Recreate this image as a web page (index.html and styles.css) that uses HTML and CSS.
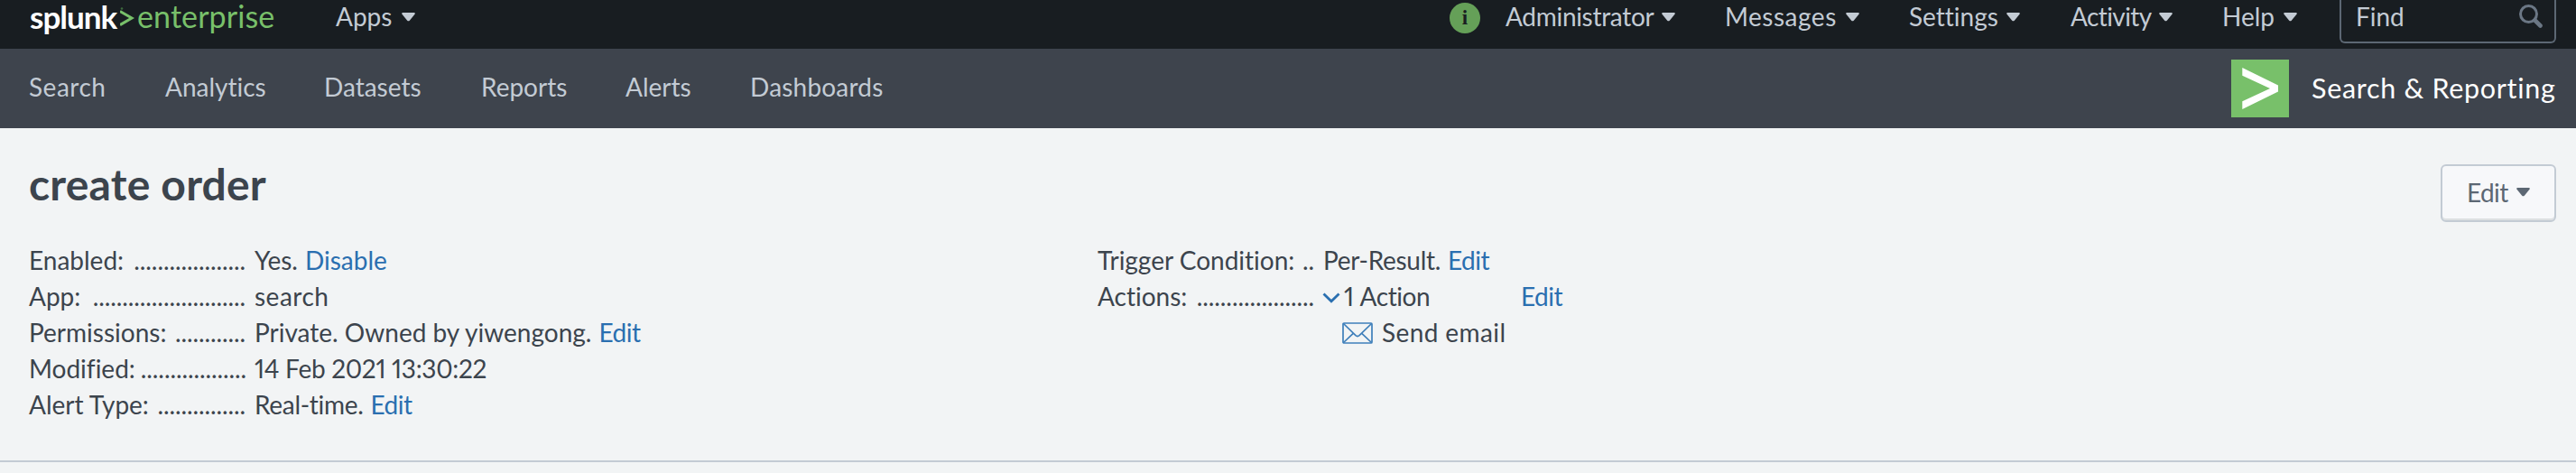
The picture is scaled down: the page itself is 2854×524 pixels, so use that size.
FILE: index.html
```html
<!DOCTYPE html>
<html lang="en">
<head>
<meta charset="utf-8">
<title>create order | Splunk</title>
<link rel="stylesheet" href="styles.css">
</head>
<body>
<svg width="0" height="0" class="defs"><defs>
<symbol id="caret" viewBox="0 0 15 10"><path d="M1.2 0H13.8Q15.4 .3 14.5 1.8L8.8 8.7Q7.5 10 6.2 8.7L.5 1.8Q-.4 .3 1.2 0Z" fill="currentColor"/></symbol>
</defs></svg>
<header class="topbar">
  <a class="logo"><span class="logo-name">splunk</span><svg class="logo-mark" viewBox="0 0 16 22"><path d="M0 4.6L13 12L0 19.6" fill="none" stroke="#78c06a" stroke-width="3"/><circle cx="2" cy="1.5" r="1.3" fill="#3c6b3d"/></svg><span class="logo-product">enterprise</span></a>
  <a class="menu apps"><span class="t-apps">Apps</span><svg class="caret"><use href="#caret"/></svg></a>
  <div class="topright">
    <span class="info">i</span>
    <a class="menu m-admin"><span class="t-admin">Administrator</span><svg class="caret"><use href="#caret"/></svg></a>
    <a class="menu m-messages"><span class="t-messages">Messages</span><svg class="caret"><use href="#caret"/></svg></a>
    <a class="menu m-settings"><span class="t-settings">Settings</span><svg class="caret"><use href="#caret"/></svg></a>
    <a class="menu m-activity"><span class="t-activity">Activity</span><svg class="caret"><use href="#caret"/></svg></a>
    <a class="menu m-help"><span class="t-help">Help</span><svg class="caret"><use href="#caret"/></svg></a>
    <div class="find"><span>Find</span><svg class="lens" viewBox="0 0 26 26"><ellipse cx="10.5" cy="10.5" rx="9" ry="9" fill="none" stroke="#6b7785" stroke-width="3"/><path d="M17.5 17.5L23.5 23.5" stroke="#6b7785" stroke-width="4.6" stroke-linecap="round"/></svg></div>
  </div>
</header>
<nav class="appbar">
  <div class="tabs">
    <a class="t-search">Search</a><a>Analytics</a><a>Datasets</a><a>Reports</a><a>Alerts</a><a class="t-dash">Dashboards</a>
  </div>
  <div class="app">
    <svg class="app-icon" viewBox="0 0 64 64"><rect width="64" height="64" fill="#78c06a"/><path d="M12.3 9L52 28.5V35.5L12.3 55V46.3L43 32L12.3 17.7Z" fill="#fff"/></svg>
    <span class="app-name">Search &amp; Reporting</span>
  </div>
</nav>
<main class="page">
  <div class="heading">
    <h1>create order</h1>
    <button class="edit-btn"><span>Edit</span><svg class="caret"><use href="#caret"/></svg></button>
  </div>
  <div class="details">
    <dl class="list">
      <dt><span>Enabled:</span><i>...................</i></dt><dd><span>Yes.</span><a class="disable">Disable</a></dd>
      <dt><span>App:</span><i>..........................</i></dt><dd><span class="t-app">search</span></dd>
      <dt><span>Permissions:</span><i>............</i></dt><dd><span class="t-owner">Private. Owned by yiwengong.</span><a>Edit</a></dd>
      <dt><span>Modified:</span><i>..................</i></dt><dd><span class="t-date">14 Feb 2021 13:30:22</span></dd>
      <dt><span>Alert Type:</span><i>...............</i></dt><dd><span class="t-type">Real-time.</span><a>Edit</a></dd>
    </dl>
    <dl class="list">
      <dt><span>Trigger Condition:</span><i>..</i></dt><dd><span class="t-trigger">Per-Result.</span><a>Edit</a></dd>
      <dt><span>Actions:</span><i>....................</i></dt>
      <dd class="action"><svg class="chevron" viewBox="0 0 20 12"><path d="M1.5 1.5L10 9.8L18.5 1.5" fill="none" stroke="#2a6fb0" stroke-width="2.8"/></svg><span class="action-count">1 Action</span><a>Edit</a></dd>
      <dd class="email"><svg class="envelope" viewBox="0 0 34 24"><g fill="none" stroke="#3f7fba" stroke-width="1.7"><rect x="1" y="1" width="32" height="22" rx="1"/><path d="M1.5 1.5L15 14.6Q17 16.4 19 14.6L32.5 1.5M1.5 22.5L12.5 12.2M32.5 22.5L21.5 12.2"/></g></svg><span class="t-email">Send email</span></dd>
    </dl>
  </div>
</main>
</body>
</html>
```
FILE: styles.css
```css
* { box-sizing: border-box; }
body { margin: 0; width: 2854px; height: 524px; overflow: hidden; background: #f2f4f5; color: #3c444d; font: 28px/40px Lato, sans-serif; font-variant-ligatures: none; font-variant-numeric: proportional-nums; }
.defs { display: block; }
.caret { width: 15px; height: 10px; flex: none; }

.topbar { height: 54px; background: #181d21; color: #c3cbd4; display: flex; padding-left: 33px; }
.logo { display: flex; width: 339px; height: 40px; white-space: nowrap; }
.logo-name { width: 99px; color: #fff; font-size: 35px; font-weight: 700; line-height: 36px; letter-spacing: -1px; }
.logo-mark { width: 16px; height: 22px; margin: 8px 3px 0 1px; }
.logo-product { color: #78c06a; font-size: 34px; line-height: 36px; letter-spacing: .1px; }
.menu { display: flex; height: 38px; line-height: 37px; white-space: nowrap; }
.menu .caret { margin: 14px 0 0 auto; }
.apps { width: 88px; }
.topright { margin-left: auto; display: flex; padding-right: 22px; }
.info { width: 34px; height: 34px; margin: 3px 28px 0 0; border-radius: 50%; background: #65a058; color: #1a1e21; font: 700 23px/33px "Liberation Serif", serif; text-align: center; }
.m-admin { width: 188px; margin-right: 55px; }
.t-admin { letter-spacing: -.3px; }
.m-messages { width: 149px; margin-right: 55px; }
.t-messages { letter-spacing: .5px; }
.m-settings { width: 123px; margin-right: 56px; }
.m-activity { width: 113px; margin-right: 55px; }
.t-activity { letter-spacing: -.6px; }
.m-help { width: 83px; margin-right: 47px; }
.find { width: 240px; height: 48px; border: 2px solid #5c6773; border-top: 0; border-radius: 0 0 6px 6px; display: flex; justify-content: space-between; padding: 0 13px 0 16px; line-height: 37px; }
.lens { width: 26px; height: 26px; margin-top: 5px; }

.appbar { height: 88px; background: #3e444d; color: #c3cbd4; display: flex; justify-content: space-between; padding: 0 22px 0 32px; }
.tabs { display: grid; grid-template-columns: 151px 176px 174px 160px 138px 160px; line-height: 85px; }
.t-search { letter-spacing: .5px; }
.t-dash { letter-spacing: .2px; }
.app { display: flex; width: 360px; color: #fff; white-space: nowrap; }
.app-icon { width: 64px; height: 64px; margin: 12px 25px 0 0; }
.app-name { font-size: 30.5px; line-height: 86px; letter-spacing: .7px; }

.page { height: 370px; border-bottom: 2px solid #c3cbd4; padding: 40px 22px 0 32px; }
.heading { display: flex; justify-content: space-between; height: 86px; }
h1 { margin: -2px 0 0; font-size: 48px; line-height: 48px; font-weight: 700; letter-spacing: .2px; }
.edit-btn { width: 128px; height: 64px; border: 2px solid #c3cbd4; border-radius: 6px; background: #f7f8fa; box-shadow: inset 0 -2px 0 #dde0e2; color: #5c6773; font: inherit; letter-spacing: -.6px; display: flex; justify-content: space-between; padding: 0 27px 0 27px; line-height: 58px; }
.edit-btn .caret { margin-top: 24px; }
.details { display: grid; grid-template-columns: 1184px 1fr; }
.list { margin: 0; display: grid; grid-template-columns: 240px auto; column-gap: 10px; grid-auto-rows: 40px; align-content: start; white-space: nowrap; }
dt { display: flex; gap: 6px; }
dt i { font-style: normal; margin-left: auto; letter-spacing: -.1px; }
dd { margin: 0; display: flex; gap: 8px; }
dd a { color: #2a6fb0; letter-spacing: -.5px; }
dd .disable { letter-spacing: 0; }
.t-app { letter-spacing: .5px; }
.t-date { letter-spacing: -.3px; }
.t-trigger, .t-type { letter-spacing: -.3px; }
.action { gap: 0; }
.chevron { width: 20px; height: 12px; margin: 16px 4px 0 -1px; }
.action-count { width: 196px; letter-spacing: -.4px; word-spacing: 1px; }
.email { grid-column: 2; padding-left: 21px; gap: 10px; }
.t-email { letter-spacing: .4px; }
.envelope { width: 34px; height: 24px; margin-top: 9px; }
```
